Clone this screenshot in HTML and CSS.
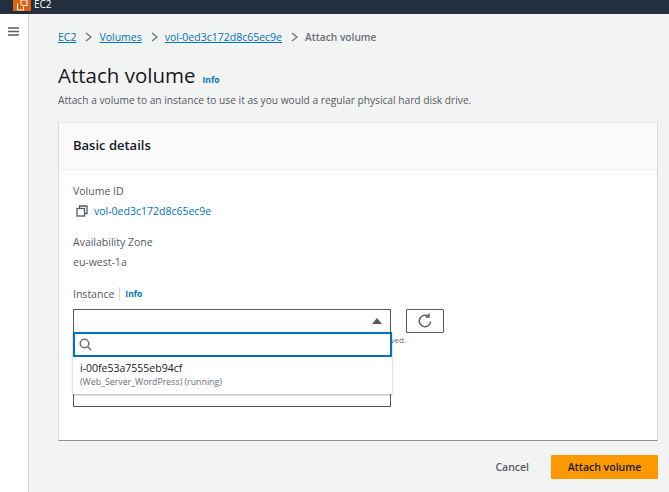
FILE: index.html
```html
<!DOCTYPE html>
<html lang="en">
<head>
  <meta charset="UTF-8">
  <title>Attach volume</title>
  <link rel="stylesheet" href="styles.css">
</head>
<body>

<header class="topbar">
  <div class="logo">
    <svg width="18" height="11" viewBox="0 0 18 11" fill="none" stroke="#fff" stroke-width="1">
      <path d="M4.500 3.500V10h6V6.500M8 5V0h6v5.500H9"/>
    </svg>
  </div>
  <span class="service">EC2</span>
</header>

<div class="layout">
  <aside class="sidebar">
    <svg width="11" height="9" viewBox="0 0 11 9" stroke="#545b64" stroke-width="1.500">
      <path d="M0 1h11M0 4.500h11M0 8h11"/>
    </svg>
  </aside>

  <main class="content">
    <nav class="crumbs">
      <a href="#">EC2</a>
      <svg class="sep" width="7" height="10" viewBox="0 0 7 10"><path d="M1 1l5 4-5 4"/></svg>
      <a href="#">Volumes</a>
      <svg class="sep" width="7" height="10" viewBox="0 0 7 10"><path d="M1 1l5 4-5 4"/></svg>
      <a href="#">vol-0ed3c172d8c65ec9e</a>
      <svg class="sep" width="7" height="10" viewBox="0 0 7 10"><path d="M1 1l5 4-5 4"/></svg>
      <span class="current">Attach volume</span>
    </nav>

    <div class="title-row">
      <h1>Attach volume</h1>
      <a class="info" href="#">Info</a>
    </div>
    <p class="lead">Attach a volume to an instance to use it as you would a regular physical hard disk drive.</p>

    <section class="card">
      <h2 class="card-head">Basic details</h2>
      <div class="card-body">
        <div class="label">Volume ID</div>
        <div class="value">
          <svg class="copy" width="12" height="12" viewBox="0 0 12 12" fill="none" stroke="#545b64" stroke-width="1.300">
            <path d="M3.500 3V1h7.500v7.500H9"/>
            <rect x="1" y="3.500" width="7.500" height="7.500"/>
          </svg>
          <a href="#">vol-0ed3c172d8c65ec9e</a>
        </div>

        <div class="label zone">Availability Zone</div>
        <div class="value zone-value">eu-west-1a</div>

        <div class="label instance">
          <span>Instance</span>
          <a class="info" href="#">Info</a>
        </div>

        <div class="select-row">
          <div class="select-wrap">
            <div class="select">
              <svg width="10" height="6" viewBox="0 0 10 6"><path d="M5 0l5 6H0z" fill="#545b64"/></svg>
            </div>
            <p class="hint">ved.</p>
            <div class="field"></div>

            <div class="dropdown">
              <div class="search">
                <svg width="13" height="13" viewBox="0 0 13 13" fill="none" stroke="#687078" stroke-width="1.500">
                  <circle cx="5.500" cy="5.500" r="4.300"/>
                  <path d="M8.700 8.700l3.600 3.600"/>
                </svg>
              </div>
              <div class="option">
                <div class="option-id">i-00fe53a7555eb94cf</div>
                <div class="option-name">(Web_Server_WordPress) (running)</div>
              </div>
            </div>
          </div>
          <button class="refresh">
            <svg width="16" height="16" viewBox="0 0 14 14" fill="none" stroke="#545b64" stroke-width="1.300">
              <path d="M12 7.500a5 5 0 1 1-2-4.600"/>
              <path d="M10.500 0.500v3h-3"/>
            </svg>
          </button>
        </div>
      </div>
    </section>

    <div class="actions">
      <a class="cancel" href="#">Cancel</a>
      <button class="primary">Attach volume</button>
    </div>
  </main>
</div>

</body>
</html>
```

FILE: styles.css
```css
* {
  box-sizing: border-box;
}
body {
  margin: 0;
  height: 492px;
  overflow: hidden;
  font-family: "Open Sans", "Noto Sans", sans-serif;
  font-size: 10.500px;
  color: #545b64;
  background: #f2f3f3;
}
a {
  color: #0073bb;
}
.topbar {
  height: 14px;
  background: #232f3e;
  display: flex;
  align-items: flex-start;
  padding-left: 13px;
  overflow: hidden;
}
.logo {
  width: 18px;
  height: 11px;
  background: #d86613;
}
.service {
  color: #fff;
  font-size: 10px;
  line-height: 8px;
  margin-left: 3px;
}
.layout {
  display: flex;
  height: 478px;
}
.sidebar {
  width: 29px;
  background: #fff;
  border-right: 1px solid #d5dbdb;
  padding: 11px 0 0 8px;
}
.content {
  flex: 1;
  padding: 14px 11px 0 29px;
}
.crumbs {
  display: flex;
  align-items: center;
  height: 18px;
}
.crumbs .sep {
  margin: 0 7px 0 9px;
  fill: none;
  stroke: #687078;
  stroke-width: 1.300;
}
.current {
  font-size: 10.200px;
  font-weight: 600;
  color: #687078;
}
.title-row {
  display: flex;
  align-items: baseline;
  margin-top: 15px;
}
h1 {
  margin: 0;
  font-size: 20.500px;
  line-height: 28px;
  font-weight: 400;
  color: #16191f;
}
.info {
  font-size: 8.500px;
  font-weight: 700;
  text-decoration: none;
}
.title-row .info {
  margin-left: 7px;
}
.lead {
  margin: 4px 0 0;
  font-size: 10.200px;
  line-height: 14px;
  color: #545b64;
}
.card {
  margin-top: 15px;
  height: 319px;
  background: #fff;
  border: 1px solid #d5dbdb;
  border-bottom-color: #879596;
  border-top-color: #eaeded;
}
.card-head {
  margin: 0;
  height: 47px;
  padding: 0 14px 2px;
  display: flex;
  align-items: center;
  font-size: 13px;
  font-weight: 600;
  color: #16191f;
  background: #fafafa;
  border-bottom: 1px solid #eaeded;
}
.card-body {
  padding: 14px 14px 0;
}
.label {
  line-height: 14px;
}
.value {
  display: flex;
  align-items: center;
  margin-top: 6px;
  line-height: 14px;
}
.value a {
  text-decoration: none;
}
.copy {
  margin: 0 6px 0 3px;
}
.zone {
  margin-top: 17px;
}
.zone-value {
  margin-top: 6px;
}
.instance {
  display: flex;
  align-items: center;
  margin-top: 18px;
}
.instance span {
  padding-right: 5px;
  border-right: 1px solid #d5dbdb;
}
.instance .info {
  margin-left: 5px;
}
.select-row {
  display: flex;
  align-items: flex-start;
  margin-top: 8px;
}
.select-wrap {
  position: relative;
  width: 318px;
}
.select {
  height: 24px;
  background: #fff;
  border: 1px solid #545b64;
  display: flex;
  align-items: center;
  justify-content: flex-end;
  padding-right: 8px;
}
.hint {
  margin: 0;
  height: 14px;
  font-size: 8px;
  line-height: 14px;
  text-align: right;
  transform: translateX(15px);
  color: #687078;
}
.field {
  height: 23px;
  margin-top: 37px;
  border: 1px solid #545b64;
  border-top: 0;
}
.dropdown {
  position: absolute;
  left: 0;
  top: 23px;
  width: 319px;
  height: 62px;
  background: #fff;
  box-shadow: 0 1px 2px rgba(0, 28, 36, 0.35);
}
.search {
  height: 25px;
  border: 2px solid #0073bb;
  display: flex;
  align-items: center;
  padding-left: 4px;
}
.option {
  padding: 4px 7px;
}
.option-id {
  line-height: 14px;
  color: #16191f;
}
.option-name {
  font-size: 8.800px;
  line-height: 14px;
  color: #687078;
}
.refresh {
  width: 38px;
  height: 24px;
  margin-left: 15px;
  background: #fff;
  border: 1px solid #545b64;
  border-radius: 1px;
  display: flex;
  align-items: center;
  justify-content: center;
  padding: 0;
}
.actions {
  display: flex;
  justify-content: flex-end;
  align-items: center;
  margin-top: 14px;
}
.cancel {
  font-weight: 600;
  color: #545b64;
  text-decoration: none;
  margin-right: 22px;
}
.primary {
  width: 107px;
  height: 24px;
  background: #ff9900;
  border: 0;
  border-radius: 1px;
  font-family: inherit;
  font-size: 10.500px;
  font-weight: 600;
  color: #16191f;
}
```
